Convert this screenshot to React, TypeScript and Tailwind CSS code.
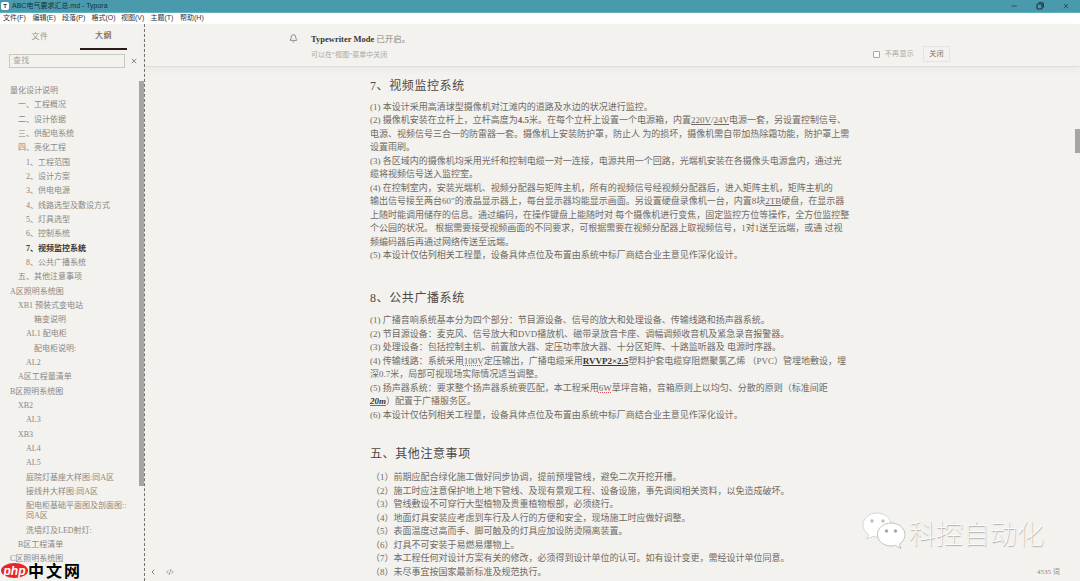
import { Bell, ChevronLeft, CodeXml, Minus, X } from 'lucide-react'
import type { ReactNode } from 'react'

const menus = ['文件(F)', '编辑(E)', '段落(P)', '格式(O)', '视图(V)', '主题(T)', '帮助(H)']

// level = indent step of the outline row
const outline: [number, ReactNode, boolean?][] = [
  [0, '量化设计说明'],
  [1, '一、工程概况'],
  [1, '二、设计依据'],
  [1, '三、供配电系统'],
  [1, '四、亮化工程'],
  [2, '1、工程范围'],
  [2, '2、设计方案'],
  [2, '3、供电电源'],
  [2, '4、线路选型及敷设方式'],
  [2, '5、灯具选型'],
  [2, '6、控制系统'],
  [2, '7、视频监控系统', true],
  [2, '8、公共广播系统'],
  [1, '五、其他注意事项'],
  [0, 'A区照明系统图'],
  [1, 'XB1 预装式变电站'],
  [3, '箱变说明'],
  [2, 'AL1 配电柜'],
  [3, '配电柜说明:'],
  [2, 'AL2'],
  [1, 'A区工程量清单'],
  [0, 'B区照明系统图'],
  [1, 'XB2'],
  [2, 'AL3'],
  [1, 'XB3'],
  [2, 'AL4'],
  [2, 'AL5'],
  [2, '庭院灯基座大样图:同A区'],
  [2, '接线井大样图:同A区'],
  [2, <>配电柜基础平面图及剖面图::<br />同A区</>],
  [2, '洗墙灯及LED射灯:'],
  [1, 'B区工程清单'],
  [0, 'C区照明系统图'],
]

const indents = ['pl-[10px]', 'pl-[18px]', 'pl-[26px]', 'pl-[34px]']

function Wavy({ children }: { children: ReactNode }) {
  return <span className="underline decoration-dotted decoration-[#e0504a] underline-offset-1">{children}</span>
}

function Line({ children }: { children: ReactNode }) {
  return <div className="whitespace-nowrap">{children}</div>
}

function Heading({ children, className }: { children: ReactNode; className: string }) {
  return <h2 className={`text-[12px] leading-[16px] tracking-[0.6px] text-[#4d4844] ${className}`}>{children}</h2>
}

export default function App() {
  return (
    <div className="relative flex h-[581px] w-[1080px] flex-col overflow-hidden bg-[#f3f2ee] font-['Liberation_Serif','Noto_Sans_CJK_SC',serif] text-[#6f6a65]">
      {/* title bar */}
      <div className="flex h-[13px] items-center border-b border-[#63b0c0] bg-[#4a9aae] font-['Liberation_Sans','Noto_Sans_CJK_SC',sans-serif] text-[7px] text-[#16323a]">
        <div className="mx-[1px] flex h-[8px] w-[8px] items-center justify-center rounded-[2px] bg-white text-[6px] font-bold text-[#333]">T</div>
        <span className="ml-[2px]">ABC电气要求汇总.md - Typora</span>
        <div className="ml-auto flex items-center">
          <Minus className="mr-[18px] h-[8px] w-[8px]" strokeWidth={2} />
          <svg className="mr-[18px]" width="8" height="8" viewBox="0 0 8 8" fill="none" stroke="#16323a" strokeWidth="1.1">
            <rect x="1" y="2" width="5" height="5" rx="1" />
            <path d="M2.500 .7H6.300a1 1 0 0 1 1 1V5.500" />
          </svg>
          <X className="mr-[10px] h-[8px] w-[8px]" strokeWidth={2} />
        </div>
      </div>

      {/* menu bar */}
      <div className="flex h-[11px] items-center gap-[7px] bg-white pl-[3px] font-['Liberation_Sans','Noto_Sans_CJK_SC',sans-serif] text-[7px] text-[#333]">
        {menus.map((m) => (
          <span key={m} className="w-[22.5px] whitespace-nowrap">{m}</span>
        ))}
      </div>

      <div className="flex min-h-0 flex-1">
        {/* sidebar */}
        <aside className="relative flex w-[145px] shrink-0 flex-col border-r border-dashed border-[#77736f]">
          <div className="flex h-[26px] items-end text-[8px]">
            <div className="flex h-[26px] w-[80px] items-center justify-center tracking-[0.5px] text-[#9a9791]">文件</div>
            <div className="flex h-[26px] w-[47px] items-center justify-center border-b-2 border-[#2b1c1c] tracking-[0.5px] text-[#4a4541]">大纲</div>
          </div>
          <div className="mt-[4px] flex items-center pl-[9px]">
            <div className="flex h-[14px] w-[116px] items-center border border-[#c9c8c3] pl-[3px] text-[8px] tracking-[0.3px] text-[#a5a39e]">查找</div>
            <X className="ml-[5px] h-[8px] w-[8px] text-[#555]" strokeWidth={2} />
          </div>
          <div className="mt-[16px] w-[140px] text-[8px] leading-[10px] text-[#8b8782]">
            {outline.map(([level, label, active], i) => (
              <div key={i} className={`py-[2.17px] ${indents[level]} ${active ? 'font-bold text-[#3b3633]' : ''}`}>{label}</div>
            ))}
          </div>
          <div className="absolute right-0 top-[57px] h-[405px] w-[5px] bg-[#a6a5a1]" />
        </aside>

        {/* editor */}
        <main className="flex min-w-0 flex-1 flex-col">
          <div className="relative z-10 flex h-[43px] shrink-0 items-start border-b border-[#e0dfdb] bg-[#f3f2ee] shadow-[0_3px_8px_rgba(0,0,0,0.04)]">
            <Bell className="ml-[144px] mt-[10px] h-[9px] w-[9px] text-[#444]" strokeWidth={1.5} />
            <div className="ml-[13px] mt-[10px]">
              <div className="text-[8.5px] leading-[11px] text-[#8b8782]">
                <span className="font-bold text-[#3c3733]">Typewriter Mode</span> 已开启。
              </div>
              <div className="mt-[6px] text-[7px] leading-[9px] text-[#aaa8a3]">可以在“视图”菜单中关闭</div>
            </div>
            <div className="ml-auto mr-[130px] mt-[22px] flex items-center">
              <div className="h-[7px] w-[7px] rounded-[1px] border border-[#a9a7a3] bg-white" />
              <span className="ml-[5px] text-[7px] tracking-[0.3px] text-[#aaa8a3]">不再显示</span>
              <div className="ml-[9px] flex h-[16px] w-[27px] items-center justify-center border border-[#e4e3df] text-[7px] tracking-[0.3px] text-[#77736f]">关闭</div>
            </div>
          </div>

          <div className="min-h-0 flex-1 overflow-hidden pl-[225px] text-[9px] leading-[13.5px]">
            <Heading className="mt-[11px]">7、视频监控系统</Heading>
            <div className="mt-[6.5px]">
              <Line>(1) 本设计采用高清球型摄像机对江滩内的道路及水边的状况进行监控。</Line>
              <Line>(2) 摄像机安装在立杆上，立杆高度为<b>4.5</b>米。在每个立杆上设置一个电源箱，内置<u>220V</u>/<u>24V</u>电源一套，另设置控制信号、</Line>
              <Line>电源、视频信号三合一的防雷器一套。摄像机上安装防护罩，防止人 为的损坏，摄像机需自带加热除霜功能，防护罩上需</Line>
              <Line>设置雨刷。</Line>
              <Line>(3) 各区域内的摄像机均采用光纤和控制电缆一对一连接，电源共用一个回路，光端机安装在各摄像头电源盒内，通过光</Line>
              <Line>缆将视频信号送入监控室。</Line>
              <Line>(4) 在控制室内，安装光端机、视频分配器与矩阵主机，所有的视频信号经视频分配器后，进入矩阵主机，矩阵主机的</Line>
              <Line>输出信号接至两台60″的液晶显示器上，每台显示器均能显示画面。另设置硬盘录像机一台，内置8块<u>2TB</u>硬盘，在显示器</Line>
              <Line>上随时能调用储存的信息。通过编码，在操作键盘上能随时对 每个摄像机进行变焦，固定监控方位等操作，全方位监控整</Line>
              <Line>个公园的状况。 根据需要接受视频画面的不同要求，可根据需要在视频分配器上取视频信号，1对1送至远端，或通 过视</Line>
              <Line>频编码器后再通过网络传送至远端。</Line>
              <Line>(5) 本设计仅估列相关工程量，设备具体点位及布置由系统中标厂商结合业主意见作深化设计。</Line>
            </div>

            <Heading className="mt-[27.500px]">8、公共广播系统</Heading>
            <div className="mt-[8px]">
              <Line>(1) 广播音响系统基本分为四个部分：节目源设备、信号的放大和处理设备、传输线路和扬声器系统。</Line>
              <Line>(2) 节目源设备：麦克风、信号放大和DVD播放机、磁带录放音卡座、调幅调频收音机及紧急录音报警器。</Line>
              <Line>(3) 处理设备：包括控制主机、前置放大器、定压功率放大器、十分区矩阵、十路监听器及 电源时序器。</Line>
              <Line>(4) 传输线路：系统采用<Wavy>100V</Wavy>定压输出，广播电缆采用<b className="text-[#3b3633] underline">RVVP2×2.5</b>塑料护套电缆穿阻燃聚氯乙烯 （PVC）管埋地敷设，埋</Line>
              <Line>深0.7米，局部可视现场实际情况适当调整。</Line>
              <Line>(5) 扬声器系统：要求整个扬声器系统要匹配，本工程采用<Wavy>6W</Wavy>草坪音箱，音箱原则上以均匀、分散的原则（标准间距</Line>
              <Line><b className="italic text-[#3b3633] underline decoration-[#e0403a]">20m</b>）配置于广播服务区。</Line>
              <Line>(6) 本设计仅估列相关工程量，设备具体点位及布置由系统中标厂商结合业主意见作深化设计。</Line>
            </div>

            <Heading className="mt-[24px]">五、其他注意事项</Heading>
            <div className="mt-[9px] pl-[1px]">
              <Line>（1）前期应配合绿化施工做好同步协调，提前预埋管线，避免二次开挖开槽。</Line>
              <Line>（2）施工时应注意保护地上地下管线、及现有景观工程、设备设施，事先调阅相关资料，以免造成破坏。</Line>
              <Line>（3）管线敷设不可穿行大型植物及贵重植物根部，必须绕行。</Line>
              <Line>（4）地面灯具安装应考虑到车行及人行的方便和安全，现场施工时应做好调整。</Line>
              <Line>（5）表面温度过高而手、脚可触及的灯具应加设防烫隔离装置。</Line>
              <Line>（6）灯具不可安装于易燃易爆物上。</Line>
              <Line>（7）本工程任何对设计方案有关的修改，必须得到设计单位的认可。如有设计变更，需经设计单位同意。</Line>
              <Line>（8）未尽事宜按国家最新标准及规范执行。</Line>
            </div>
          </div>
        </main>
      </div>

      {/* editor scrollbar */}
      <div className="absolute right-0 top-[129px] h-[24px] w-[5px] bg-[#a6a5a1]" />

      {/* footer controls */}
      <ChevronLeft className="absolute left-[149px] top-[568px] h-[8px] w-[8px] text-[#444]" strokeWidth={2} />
      <CodeXml className="absolute left-[166px] top-[568px] h-[8px] w-[8px] text-[#555]" strokeWidth={1.5} />
      <div className="absolute left-[1037px] top-[567px] text-[7px] leading-[10px] text-[#8b8782]">4535 词</div>

      {/* watermark */}
      <svg className="absolute left-[862px] top-[512px]" width="44" height="40" viewBox="0 0 44 40">
        <path d="M15 1C7 1 1 6.500 1 13c0 4 2.200 7 5.500 9.500L5 27l6-2.600c1.500.4 3 .6 4.500.6 7.500 0 13.500-5.500 13.500-12S23 1 15 1z" fill="#fff" stroke="#c9c8c4" strokeWidth="0.7" />
        <circle cx="10" cy="9" r="1.800" fill="#c2c1bd" />
        <circle cx="21" cy="9" r="1.800" fill="#c2c1bd" />
        <path d="M29 11c-7.500 0-13.500 5-13.500 11.500S21.500 34 29 34c1.500 0 3-.2 4.300-.6L39 36.500l-1.500-4.500C40.800 30 43 26.500 43 22.500 43 16 36.500 11 29 11z" fill="#fff" stroke="#b5b4b0" strokeWidth="0.8" />
        <circle cx="24.500" cy="19" r="1.700" fill="#a9a8a4" />
        <circle cx="33.500" cy="19" r="1.700" fill="#a9a8a4" />
      </svg>
      <div className="absolute left-[909px] top-[514px] whitespace-nowrap font-['Noto_Sans_CJK_SC',sans-serif] text-[27px] font-thin leading-[38px] text-white [text-shadow:0.5px_0.5px_1px_rgba(0,0,0,0.35)]">
        科控自动化
      </div>

      {/* site badge */}
      <div className="absolute bottom-[3px] left-[1px] flex h-[15px] items-center">
        <div className="flex h-[15px] w-[27px] items-center justify-center rounded-[50%] bg-[#e8262a] font-['Liberation_Sans',sans-serif] text-[12px] font-bold italic leading-none text-white">php</div>
        <div className="font-['Noto_Sans_CJK_SC',sans-serif] text-[16px] font-bold leading-[15px] tracking-[2px] text-black">中文网</div>
      </div>
    </div>
  )
}
